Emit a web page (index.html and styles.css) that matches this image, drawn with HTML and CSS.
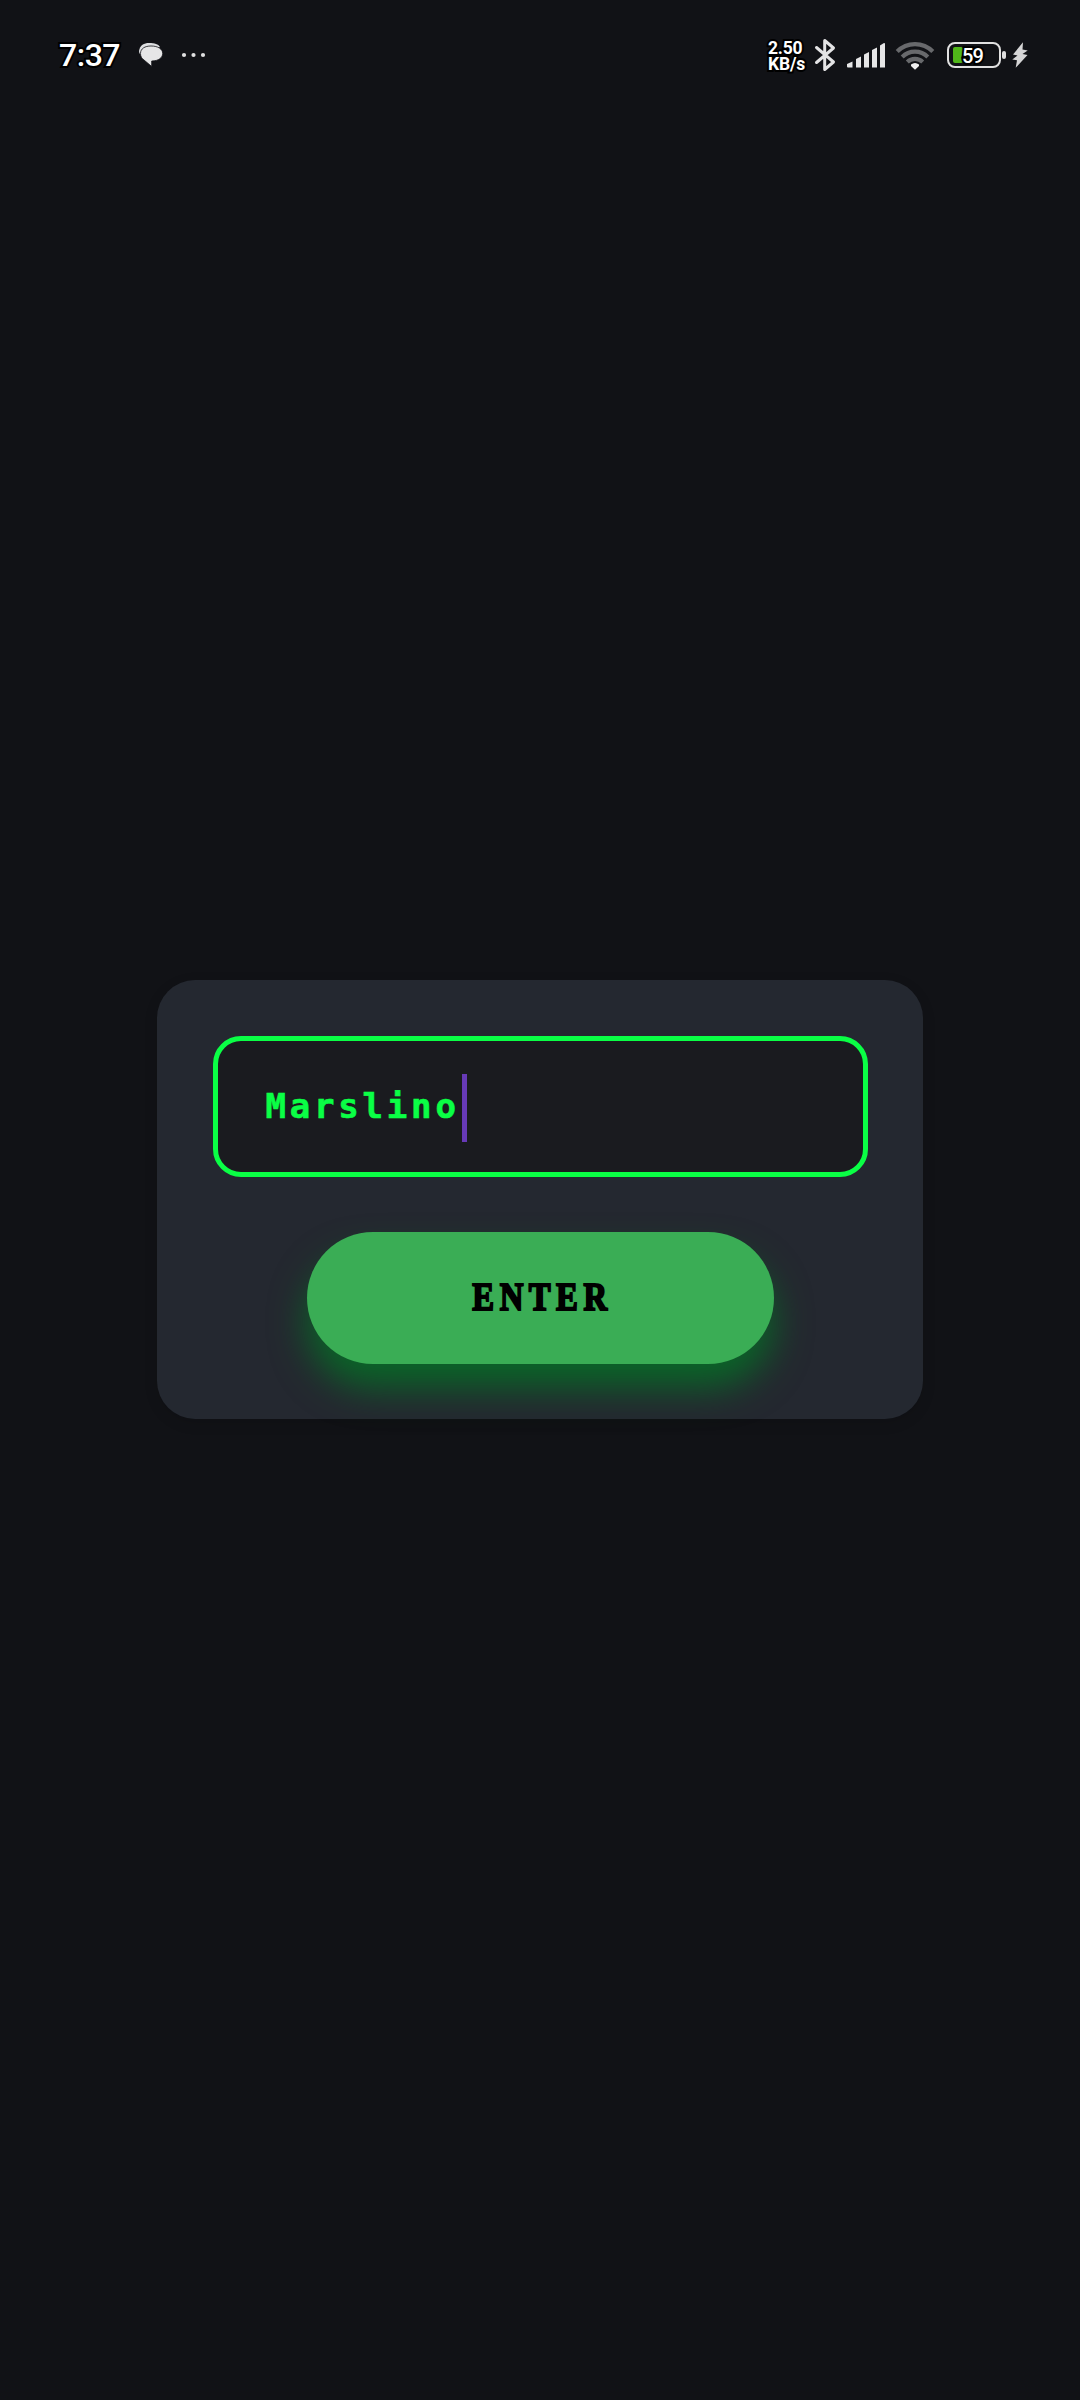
FILE: index.html
```html
<!DOCTYPE html>
<html lang="en">
<head>
<meta charset="utf-8">
<title>Enter name</title>
<link rel="stylesheet" href="styles.css">
</head>
<body>
<header class="status">
  <span class="clock">7:37</span>
  <svg class="chat" width="26" height="26" viewBox="0 0 26 26">
    <path d="M1 9C2 3 6 1 11 1c6 0 9 1 11 4L5 14C2 13 1 11 1 9z" fill="#dedfe1"/>
    <path d="M2.500 11.500C2.500 6.500 7 4 13 4c7 0 11.700 3 11.700 7.500 0 4-4 7.500-11 7.500v5.500L6 18c-2.400-1.500-3.500-3.700-3.500-6.500z" fill="#e6e6e7" stroke="#111216" stroke-width=".8"/>
  </svg>
  <svg class="dots" width="26" height="6" viewBox="0 0 26 6" fill="#e0e0e1"><circle cx="3" cy="3" r="2.100"/><circle cx="12.500" cy="3" r="2.100"/><circle cx="22" cy="3" r="2.100"/></svg>
  <span class="speed"><span>2.50</span><span>KB/s</span></span>
  <svg class="bluetooth" width="22" height="34" viewBox="0 0 22 34" fill="none" stroke="#e4e4e5" stroke-width="3" stroke-linejoin="round" stroke-linecap="round"><path d="M2.500 9.500 19.500 24 10.700 31.500V2.500L19.500 10 2.500 24.500"/></svg>
  <svg class="signal" width="39" height="26" viewBox="0 0 39 26" fill="#e6e6e7"><path d="M0 22l5.500-2.500v6H1q-1 0-1-1zM9 17l5-2.500v11H9zM17 12.500l5-2.500v15.500h-5zM25 8l5-2.500v20h-5zM33 3.500l3.500-2.300Q38 .5 38 2v23.500h-5z"/></svg>
  <svg class="wifi" width="40" height="30" viewBox="0 0 40 30" fill="none" stroke="#68696c" stroke-width="4.200"><path d="M2.200 11.500A25 25 0 0 1 37.800 11.500M7.200 17A18 18 0 0 1 32.800 17M12.300 22A11 11 0 0 1 27.700 22"/><path d="M16 24.500Q20 21.500 24 24.500L24 26 20 29.800 16 26z" fill="#f0f0f0" stroke="none"/></svg>
  <span class="battery"><span class="charge"></span><span class="percent">59</span></span>
  <span class="nub"></span>
  <svg class="bolt" width="16" height="26" viewBox="0 0 16 26" fill="#d5d5d6"><path d="M11 .3 1 12.500 5.500 13.500.3 17.500 5 18.300 3.700 25.700 15.500 13 10.500 12 15.700 8.500 10.500 7.500z"/></svg>
</header>
<main class="page">
  <section class="card">
    <div class="field"><span class="value">Marslino</span><span class="caret"></span></div>
    <button class="enter"><span class="label">ENTER</span></button>
  </section>
</main>
</body>
</html>
```
FILE: styles.css
```css
* { box-sizing: border-box; }
body {
  margin: 0;
  height: 2400px;
  background: #111216;
  color: #fff;
  font-family: Roboto, sans-serif;
  display: flex;
  flex-direction: column;
  overflow: hidden;
}
.status {
  height: 109px;
  flex: none;
  display: flex;
  align-items: center;
  padding-left: 59px;
}
.status svg { flex: none; }
.clock, .speed, .percent {
  -webkit-text-stroke: 4px #000;
  paint-order: stroke fill;
}
.clock { width: 79px; font-size: 32px; font-weight: 500; line-height: 36px; letter-spacing: -.5px; padding-top: 1px; }
.dots { margin-left: 17px; }
.speed {
  display: flex;
  flex-direction: column;
  width: 46px;
  margin-left: 561px;
  padding-top: 2px;
  font-size: 17.5px;
  font-weight: 700;
  line-height: 16px;
  letter-spacing: -.2px;
}
.signal { margin-left: 11px; }
.wifi { margin-left: 9px; }
.battery {
  position: relative;
  flex: none;
  width: 54px;
  height: 26px;
  margin-left: 12px;
  border: 2.5px solid #e1e1e1;
  border-radius: 8px;
}
.charge {
  position: absolute;
  left: 4px;
  top: 3px;
  width: 10px;
  height: 16px;
  border-radius: 2px;
  background: #50b719;
}
.percent {
  position: absolute;
  left: 13px;
  top: 0;
  font-size: 20px;
  font-weight: 500;
  line-height: 24px;
  letter-spacing: -.8px;
}
.nub { width: 4px; height: 8px; margin-left: 1px; border-radius: 2px; background: #dedede; }
.bolt { margin-left: 6px; }
.page { flex: 1; display: flex; flex-direction: column; align-items: center; padding-top: 871px; }
.card {
  width: 766px;
  height: 439.3px;
  padding-top: 56px;
  display: flex;
  flex-direction: column;
  align-items: center;
  gap: 55.5px;
  border-radius: 38px;
  background: #242830;
  box-shadow: 0 4px 14px rgba(0, 0, 0, .12);
}
.field {
  flex: none;
  width: 655px;
  height: 140.5px;
  display: flex;
  align-items: center;
  padding-left: 48px;
  border: 5px solid #0aff45;
  border-radius: 28px;
  background: #1a1b1f;
}
.value {
  width: 196px;
  color: #0aff45;
  font: 700 34px/40px "DejaVu Sans Mono", monospace;
  letter-spacing: 3.8px;
  -webkit-text-stroke: .6px #0aff45;
  white-space: nowrap;
}
.caret { width: 5px; height: 68px; background: #673ab7; margin-top: 3px; }
.enter {
  flex: none;
  width: 467px;
  height: 131.5px;
  padding: 0;
  border: 0;
  border-radius: 66px;
  background: #3aad55;
  box-shadow: 0 24px 36px rgba(0, 125, 38, .72);
}
.label {
  display: inline-block;
  color: #000;
  font: 700 39px/48px "Liberation Serif", serif;
  letter-spacing: 6.5px;
  -webkit-text-stroke: 2px #000;
  transform: translate(2px, -1.5px) scaleX(.84);
}
```
